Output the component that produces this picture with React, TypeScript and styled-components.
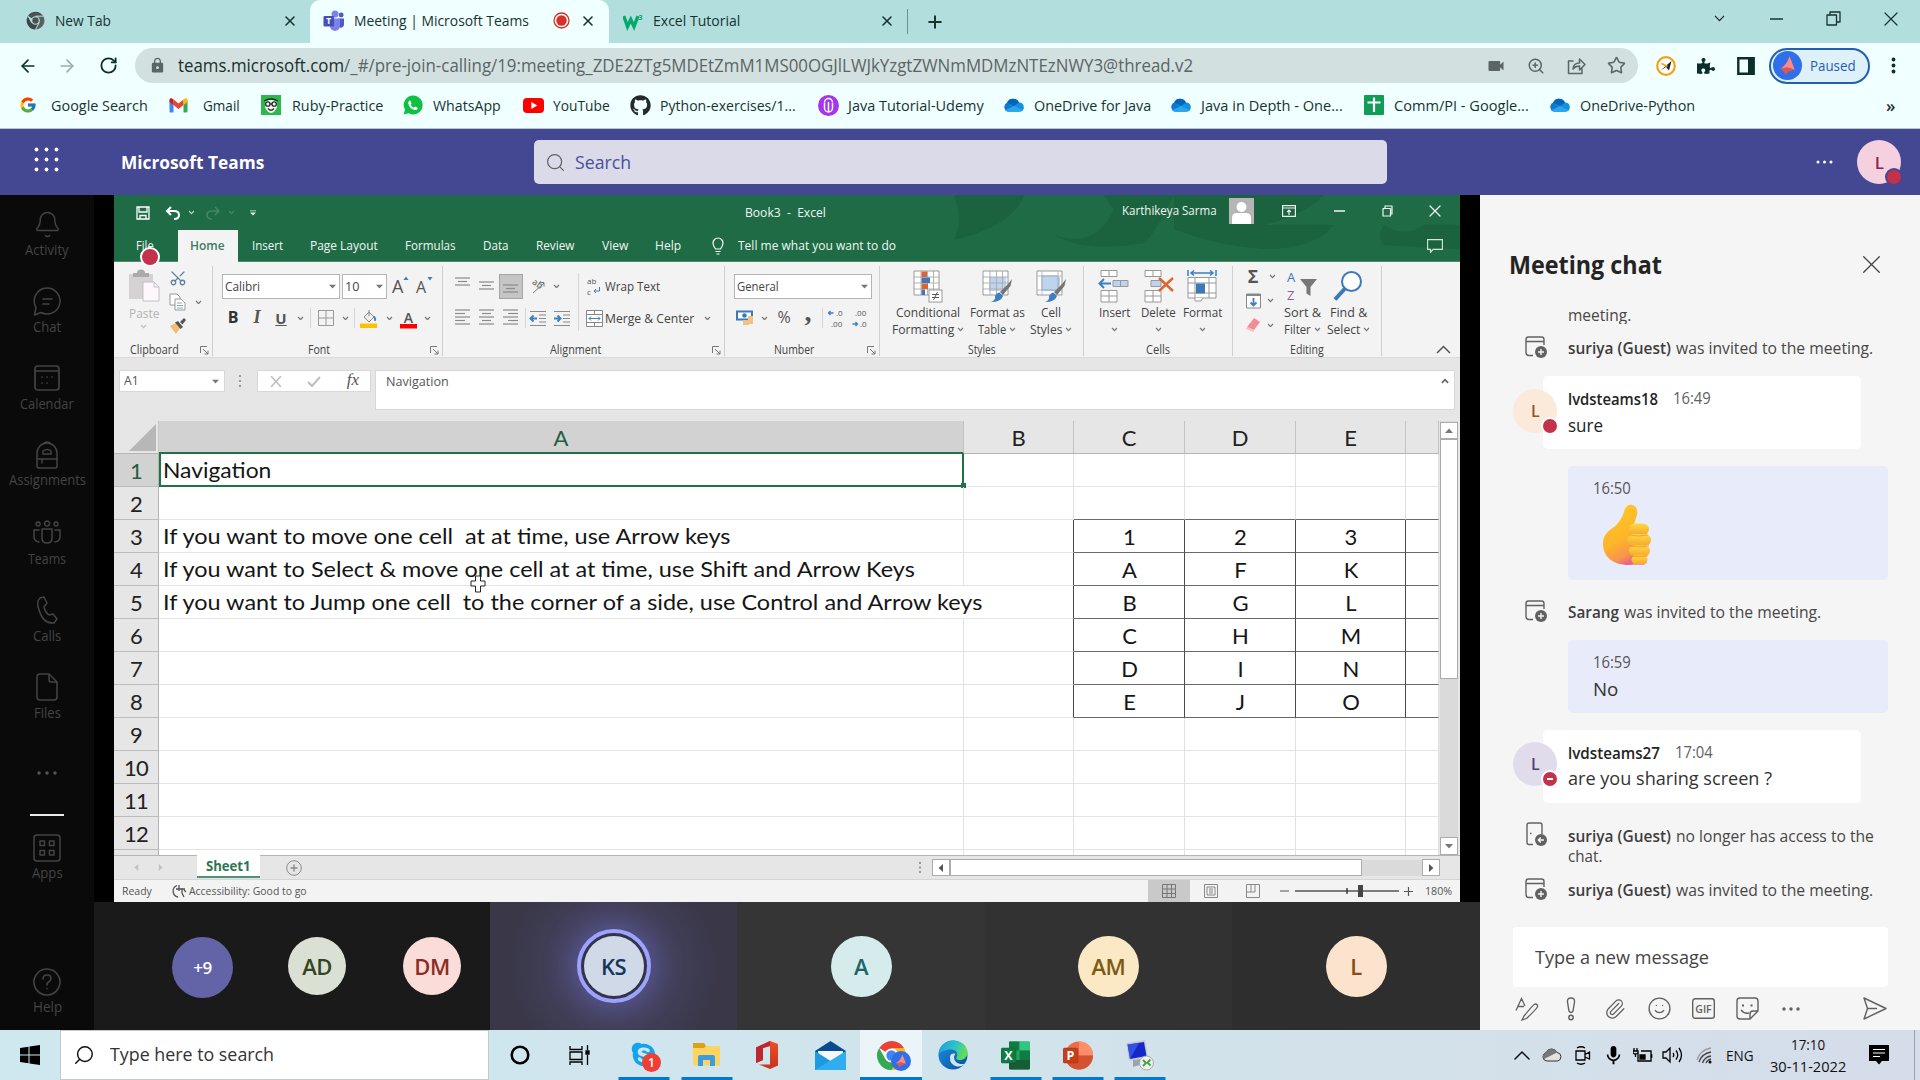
import React, { useLayoutEffect, useRef, useState } from "react";
import styled, { createGlobalStyle, css } from "styled-components";
import { FcGoogle } from "react-icons/fc";
import { FaWhatsapp, FaGithub, FaSkype, FaPuzzlePiece } from "react-icons/fa";
import { MdVideocam, MdLock, MdMic } from "react-icons/md";
import { ArrowLeft, ArrowRight, RotateCw, X, Plus, Star, ZoomIn, Search, Bell, Paperclip, Smile, Scissors } from "lucide-react";

const UI = `"Segoe UI", "Open Sans", "Noto Sans", sans-serif`;
const CAL = `Lato, "Open Sans", sans-serif`;

const Global = createGlobalStyle`
  * { box-sizing: border-box; }
  body { margin: 0; font-family: ${UI}; overflow: hidden; font-variant-ligatures: none; }
  svg { display: block; flex: none; }
`;

/* ---------- text fitted to a column width ---------- */
const FitBox = styled.span<{ $w: number; $size: number; $weight?: number; $color?: string; $font?: string; $ml?: number }>`
  display: block;
  flex: none;
  width: ${p => p.$w}px;
  margin-left: ${p => p.$ml ?? 0}px;
  font-family: ${p => p.$font ?? UI};
  font-size: ${p => p.$size}px;
  font-weight: ${p => p.$weight ?? 400};
  color: ${p => p.$color ?? "inherit"};
  line-height: 1.36;
  white-space: pre;
`;
const FitInner = styled.span`
  display: inline-block;
  transform-origin: 0 50%;
`;
type TProps = { w: number; s: number; b?: number; c?: string; f?: string; ml?: number; children: React.ReactNode };
function T({ w, s, b, c, f, ml, children }: TProps) {
  const ref = useRef<HTMLSpanElement>(null);
  const [k, setK] = useState(1);
  useLayoutEffect(() => {
    if (ref.current) setK(w / ref.current.offsetWidth);
  }, [w, s]);
  return (
    <FitBox $w={w} $size={s} $weight={b} $color={c} $font={f} $ml={ml}>
      <FitInner ref={ref} style={{ transform: `scaleX(${k})` }}>{children}</FitInner>
    </FitBox>
  );
}

/* ---------- generic parts ---------- */
const Screen = styled.div`
  width: 1920px;
  height: 1080px;
  display: flex;
  flex-direction: column;
  background: #000;
  overflow: hidden;
`;
const Slot = styled.div<{ $w: number; $ml?: number; $h?: number; $end?: number; $up?: number }>`
  flex: none;
  width: ${p => p.$w}px;
  margin-left: ${p => p.$ml ?? 0}px;
  display: flex;
  align-items: center;
  justify-content: center;
  ${p => p.$h && css`height: ${p.$h}px;`}
  ${p => p.$end !== undefined && css`align-items: flex-end; padding-bottom: ${p.$end}px;`}
  ${p => p.$up && css`margin-top: -${p.$up}px;`}
`;
const Spacer = styled.div`flex: 1;`;

/* ---------- browser chrome ---------- */
const TabStrip = styled.div`
  height: 43px;
  background: #b2dfdd;
  display: flex;
  align-items: stretch;
  color: #17332f;
`;
const Tab = styled.div<{ $w: number; $pl: number; $active?: boolean }>`
  flex: none;
  width: ${p => p.$w}px;
  padding-left: ${p => p.$pl}px;
  padding-bottom: 2px;
  display: flex;
  align-items: center;
  ${p => p.$active && css`background: #f0ffff; border-radius: 10px 10px 0 0;`}
`;
const TabRule = styled.div`
  width: 1px;
  height: 25px;
  margin: 9px 0 0 4px;
  background: #6d8f8e;
`;
const WindowButtons = styled.div`
  display: flex;
  align-items: center;
  padding-bottom: 6px;
`;
const Toolbar = styled.div`
  height: 45px;
  background: #f0ffff;
  display: flex;
  align-items: center;
  color: #0c2f2d;
`;
const Omnibox = styled.div`
  width: 1503px;
  height: 35px;
  margin-left: 17px;
  border-radius: 18px;
  background: #d3e0e0;
  display: flex;
  align-items: center;
  color: #5a6565;
`;
const Host = styled.span`color: #17302e;`;
const ProfilePill = styled.div`
  width: 101px;
  height: 36px;
  margin-left: 13px;
  border: 2px solid #1f5fb5;
  border-radius: 18px;
  background: #def0f8;
  display: flex;
  align-items: center;
  padding-left: 2px;
`;
const Bookmarks = styled.div`
  height: 41px;
  padding: 0 0 5px 19px;
  background: #f0ffff;
  border-bottom: 1px solid #b9c6c8;
  display: flex;
  align-items: center;
  color: #17332f;
`;
const Bookmark = styled.div<{ $w: number }>`
  flex: none;
  width: ${p => p.$w}px;
  display: flex;
  align-items: center;
`;
const BookIcon = styled.div<{ $w: number }>`
  flex: none;
  width: ${p => p.$w}px;
`;

/* ---------- teams header ---------- */
const TeamsBar = styled.div`
  height: 66px;
  background: #444791;
  display: flex;
  align-items: center;
  color: #fff;
`;
const TeamsSearch = styled.div`
  width: 853px;
  height: 44px;
  margin-left: 270px;
  border-radius: 5px;
  background: #dadae8;
  display: flex;
  align-items: center;
  padding-left: 11px;
`;
const Avatar = styled.div<{ $d: number; $bg: string; $c: string; $s?: number; $ml?: number; $mt?: number }>`
  position: relative;
  flex: none;
  width: ${p => p.$d}px;
  height: ${p => p.$d}px;
  margin-left: ${p => p.$ml ?? 0}px;
  margin-top: ${p => p.$mt ?? 0}px;
  border-radius: 50%;
  background: ${p => p.$bg};
  color: ${p => p.$c};
  font-size: ${p => p.$s ?? 22}px;
  font-weight: 600;
  letter-spacing: -0.5px;
  display: flex;
  align-items: center;
  justify-content: center;
`;
const Presence = styled.span<{ $ring: string; $d: number }>`
  position: absolute;
  right: -2px;
  bottom: -2px;
  width: ${p => p.$d}px;
  height: ${p => p.$d}px;
  border-radius: 50%;
  border: 2px solid ${p => p.$ring};
  background: #c4314b;
  display: flex;
  align-items: center;
  justify-content: center;
`;
const Dash = styled.i`
  width: 6px;
  height: 2px;
  background: #fff;
`;

/* ---------- body ---------- */
const Body = styled.div`
  height: 835px;
  display: flex;
`;
const Rail = styled.nav`
  width: 94px;
  background: #0a0a0a;
  color: #444;
  display: flex;
  flex-direction: column;
`;
const RailItem = styled.div<{ $h?: number }>`
  height: ${p => p.$h ?? 77.2}px;
  flex: none;
  display: flex;
  flex-direction: column;
  align-items: center;
`;
const RailIcon = styled.div<{ $pull?: number }>`
  height: 58px;
  display: flex;
  align-items: center;
  margin-bottom: -${p => p.$pull ?? 13}px;
`;
const RailDots = styled.div`
  height: 77px;
  display: flex;
  align-items: center;
  justify-content: center;
`;
const RailRule = styled.div`
  width: 34px;
  height: 2px;
  margin: 2px 0 3px 30px;
  background: #e8e8e8;
`;
const Stage = styled.main`
  width: 1386px;
  display: flex;
  flex-direction: column;
`;
const ShareArea = styled.div`
  height: 707px;
  padding: 0 20px;
  background: #000;
`;

/* ---------- excel ---------- */
const Excel = styled.section`
  position: relative;
  width: 1346px;
  height: 707px;
  display: flex;
  flex-direction: column;
  background: #e6e6e6;
`;
const XlTop = styled.div`
  position: relative;
  height: 67px;
  background: #1e6b45;
  border-bottom: 1px solid #4c8b6b;
  color: #f1f7f3;
`;
const Swirls = styled.svg`
  position: absolute;
  left: 820px;
  top: 0;
`;
const XlTitle = styled.div`
  position: relative;
  height: 35px;
  display: flex;
  align-items: center;
`;
const XlTabs = styled.div`
  position: relative;
  height: 32px;
  display: flex;
  align-items: center;
`;
const HomeTab = styled.div`
  width: 60px;
  height: 32px;
  margin-left: 24px;
  padding-right: 2px;
  background: #f3f3f3;
  display: flex;
  align-items: center;
  justify-content: center;
`;
const UserPic = styled.div`
  width: 25px;
  height: 26px;
  margin: -3px 0 0 12px;
  background: #b5b5b5;
  overflow: hidden;
`;
const RecDot = styled.span`
  position: absolute;
  left: 26px;
  top: 52px;
  width: 20px;
  height: 20px;
  border-radius: 50%;
  border: 2px solid #fff;
  background: #c4314b;
`;
const Ribbon = styled.div`
  height: 96px;
  background: #f3f3f3;
  border-bottom: 1px solid #dadada;
  display: flex;
  color: #444;
`;
const Group = styled.div<{ $w: number }>`
  position: relative;
  flex: none;
  width: ${p => p.$w}px;
  height: 90px;
  margin-top: 4px;
  border-right: 1px solid #cfcfcf;
  display: flex;
  flex-direction: column;
`;
const GroupBody = styled.div`
  flex: none;
  height: 75px;
  display: flex;
`;
const GroupRows = styled.div<{ $full?: boolean }>`
  flex: none;
  display: flex;
  flex-direction: column;
  padding-top: 4px;
  ${p => p.$full && css`height: 75px;`}
`;
const GroupRow = styled.div`
  height: 32px;
  display: flex;
  align-items: center;
`;
const GroupFoot = styled.div`
  flex: none;
  height: 17px;
  display: flex;
  align-items: center;
  justify-content: center;
`;
const Launcher = styled.span`
  position: absolute;
  right: 3px;
  bottom: 1px;
`;
const ClipCol = styled.div`
  width: 61px;
  padding: 3px 2px 0 0;
  display: flex;
  flex-direction: column;
  align-items: center;
  gap: 2px;
  color: #b4b4b4;
`;
const MiniCol = styled.div`
  display: flex;
  flex-direction: column;
`;
const MiniRow = styled.div<{ $h?: number }>`
  height: ${p => p.$h ?? 24}px;
  display: flex;
  align-items: center;
`;
const CutIcon = styled(Scissors)`
  margin-left: -6px;
  transform: rotate(-90deg);
`;
const Field = styled.div<{ $w: number; $ml?: number }>`
  flex: none;
  width: ${p => p.$w}px;
  height: 25px;
  margin-left: ${p => p.$ml ?? 0}px;
  padding: 0 3px 0 2px;
  background: #fff;
  border: 1px solid #b5b5b5;
  display: flex;
  align-items: center;
  justify-content: space-between;
`;
const Pressed = styled.div`
  width: 24px;
  height: 25px;
  background: #c5c5c5;
  border: 1px solid #a5a5a5;
  display: flex;
  align-items: center;
  justify-content: center;
`;
const VRule = styled.div<{ $h: number; $ml?: number; $mt?: number }>`
  width: 1px;
  height: ${p => p.$h}px;
  margin-left: ${p => p.$ml ?? 0}px;
  margin-top: ${p => p.$mt ?? 0}px;
  background: #d6d6d6;
`;
const Glyph = styled.span<{ $s: number; $serif?: boolean; $b?: boolean; $i?: boolean; $u?: boolean; $c?: string; $up?: number }>`
  font-family: ${p => (p.$serif ? `"Liberation Serif", serif` : UI)};
  font-size: ${p => p.$s}px;
  font-weight: ${p => (p.$b ? 700 : 400)};
  font-style: ${p => (p.$i ? "italic" : "normal")};
  text-decoration: ${p => (p.$u ? "underline" : "none")};
  color: ${p => p.$c ?? "#555"};
  margin-top: -${p => p.$up ?? 0}px;
  line-height: 1.2;
`;
const Big = styled.div<{ $w: number; $ml?: number }>`
  flex: none;
  width: ${p => p.$w}px;
  margin-left: ${p => p.$ml ?? 0}px;
  padding-top: 2px;
  display: flex;
  flex-direction: column;
  align-items: center;
  color: #444;
`;
const BigIcon = styled.div`
  height: 36px;
  display: flex;
  align-items: center;
`;
const BigLine = styled.div`
  height: 17px;
  display: flex;
  align-items: center;
  gap: 3px;
`;
const FormulaRow = styled.div`
  height: 63px;
  padding: 12px 0 0 5px;
  display: flex;
  align-items: flex-start;
  color: #555;
`;
const NameBox = styled.div<{ $w: number; $ml?: number; $h?: number }>`
  width: ${p => p.$w}px;
  height: ${p => p.$h ?? 22}px;
  margin-left: ${p => p.$ml ?? 0}px;
  background: #fff;
  border: 1px solid #d8d8d8;
  display: flex;
  align-items: center;
  ${p => p.$h && css`align-items: flex-start; padding-top: 2px;`}
`;
const GridArea = styled.div`
  height: 434px;
  display: flex;
`;
const Sheet = styled.div`
  width: 1325px;
  height: 434px;
  overflow: hidden;
`;
const HeadRow = styled.div`
  height: 33px;
  display: flex;
  border-bottom: 1px solid #b5b5b5;
`;
const Corner = styled.div`
  width: 45px;
  display: flex;
  align-items: flex-end;
  justify-content: flex-end;
  padding: 0 2px 2px 0;
  border-right: 1px solid #c8c8c8;
`;
const ColHead = styled.div<{ $w: number; $sel?: boolean }>`
  flex: none;
  width: ${p => p.$w}px;
  background: ${p => (p.$sel ? "#d2d2d2" : "#e6e6e6")};
  color: ${p => (p.$sel ? "#215f42" : "#222")};
  border-right: 1px solid #c2c2c2;
  display: flex;
  align-items: center;
  justify-content: center;
  font: 22px ${CAL};
  ${p => p.$sel && css`border-bottom: 2px solid #217346; margin-bottom: -1px; padding-top: 1px;`}
`;
const GridRow = styled.div`
  height: 33px;
  display: flex;
  background: #fff;
`;
const RowHead = styled.div<{ $sel?: boolean }>`
  flex: none;
  width: 45px;
  background: ${p => (p.$sel ? "#d2d2d2" : "#e6e6e6")};
  color: ${p => (p.$sel ? "#215f42" : "#222")};
  border-right: 1px solid #b5b5b5;
  border-bottom: 1px solid #bcbcbc;
  display: flex;
  align-items: center;
  justify-content: center;
  font: 22px ${CAL};
  letter-spacing: -0.8px;
`;
const Cell = styled.div<{ $w: number; $box?: boolean; $boxTop?: boolean; $open?: boolean; $sel?: boolean; $left?: boolean; $edge?: boolean }>`
  position: relative;
  flex: none;
  width: ${p => p.$w}px;
  padding: 0 0 0 ${p => (p.$left ? 4 : 1)}px;
  border-right: 1px solid ${p => (p.$open ? "transparent" : p.$box || p.$edge ? "#4a4a4a" : "#e0e0e0")};
  border-bottom: 1px solid ${p => (p.$box || p.$boxTop ? "#6a6a6a" : "#e4e4e4")};
  display: flex;
  align-items: center;
  justify-content: ${p => (p.$left ? "flex-start" : "center")};
  color: #151515;
  font: 22px ${CAL};
  z-index: ${p => (p.$left ? 1 : 0)};
  ${p => p.$sel && css`border: 2px solid #217346; border-top: 0; padding: 1px 0 0 2px;`}
`;
const Handle = styled.i`
  position: absolute;
  right: -4px;
  bottom: -3px;
  width: 5px;
  height: 5px;
  background: #217346;
`;
const VScroll = styled.div`
  width: 18px;
  margin-left: 1px;
  padding-top: 1px;
  background: #dadada;
  display: flex;
  flex-direction: column;
`;
const ScrollBox = styled.div<{ $w: number; $h: number }>`
  flex: none;
  width: ${p => p.$w}px;
  height: ${p => p.$h}px;
  background: #fff;
  border: 1px solid #ababab;
  display: flex;
  align-items: center;
  justify-content: center;
`;
const SheetTabs = styled.div`
  height: 25px;
  border-top: 1px solid #b5b5b5;
  border-bottom: 1px solid #d5d5d5;
  display: flex;
  align-items: center;
`;
const SheetTab = styled.div`
  width: 63px;
  height: 23px;
  margin: -2px 0 0 33px;
  padding-right: 1px;
  background: #fff;
  border-bottom: 2px solid #4f9274;
  display: flex;
  align-items: center;
  justify-content: center;
`;
const HTrack = styled.div`
  width: 60px;
  height: 16px;
  background: #dadada;
`;
const XlStatus = styled.div`
  height: 22px;
  padding-right: 8px;
  background: #f3f3f3;
  display: flex;
  align-items: center;
  color: #555;
`;
const ViewOn = styled.div`
  width: 42px;
  height: 22px;
  background: #c9c9c9;
  display: flex;
  align-items: center;
  justify-content: center;
`;
const Cursor = styled.svg`
  position: absolute;
  left: 356px;
  top: 380px;
  z-index: 2;
`;

/* ---------- participants ---------- */
const Strip = styled.div`
  height: 128px;
  display: flex;
  background: #1a1a1a;
`;
const Overflow = styled.div`
  width: 396px;
  display: flex;
  align-items: center;
`;
const Tile = styled.div<{ $bg: string; $w: number }>`
  width: ${p => p.$w}px;
  display: flex;
  align-items: center;
  justify-content: center;
  background: ${p => p.$bg};
`;
const SpeakRing = styled.div`
  width: 74px;
  height: 74px;
  border-radius: 50%;
  border: 4px solid #9ea2ff;
  background: #33334a;
  box-shadow: 0 0 26px 8px rgba(98, 100, 180, 0.45);
  display: flex;
  align-items: center;
  justify-content: center;
`;

/* ---------- chat ---------- */
const Chat = styled.aside`
  width: 440px;
  background: #f5f5f5;
  display: flex;
  flex-direction: column;
  color: #484644;
`;
const ChatHead = styled.div`
  height: 112px;
  padding: 26px 40px 0 29px;
  display: flex;
  align-items: center;
  justify-content: space-between;
`;
const ClippedLine = styled.div`
  height: 17px;
  padding-left: 88px;
  overflow: hidden;
`;
const Raised = styled.div<{ $n: number }>`
  margin-top: -${p => p.$n}px;
`;
const Feed = styled.div`
  height: 592px;
  overflow: hidden;
`;
const Event = styled.div<{ $mt: number; $h: number }>`
  height: ${p => p.$h}px;
  margin-top: ${p => p.$mt}px;
  padding-left: 44px;
  display: flex;
  align-items: flex-start;
`;
const EventText = styled.div<{ $drop?: number }>`
  margin: ${p => p.$drop ?? 2}px 0 0 20px;
  display: grid;
  grid-template-columns: auto auto;
  justify-content: start;
  line-height: 20px;
`;
const Msg = styled.div<{ $mt: number }>`
  height: 73px;
  margin: ${p => p.$mt}px 0 0 33px;
  display: flex;
`;
const Bubble = styled.div`
  width: 318px;
  margin-left: -14px;
  padding: 12px 0 0 25px;
  background: #fff;
  border-radius: 5px;
`;
const AvatarWrap = styled.div<{ $mt: number }>`
  position: relative;
  z-index: 1;
  margin-top: ${p => p.$mt}px;
`;
const Mine = styled.div<{ $h: number; $mt: number }>`
  width: 320px;
  height: ${p => p.$h}px;
  margin: ${p => p.$mt}px 0 0 88px;
  padding: 12px 0 0 25px;
  background: #e8ebfa;
  border-radius: 5px;
`;
const EmojiLine = styled.div`
  padding: 1px 0 0 9px;
`;
const NameLine = styled.div`
  display: flex;
  height: 25px;
`;
const Compose = styled.div`
  width: 375px;
  height: 60px;
  margin: 11px 0 0 33px;
  padding-left: 22px;
  background: #fff;
  border-radius: 4px;
  display: flex;
  align-items: center;
`;
const ComposeTools = styled.div`
  height: 43px;
  padding: 0 0 0 25px;
  display: flex;
  align-items: center;
  color: #616161;
`;

/* ---------- taskbar ---------- */
const Taskbar = styled.footer`
  height: 50px;
  background: linear-gradient(90deg, #cfe7ee 0%, #d0e5ed 35%, #d3e1ea 75%, #d5dcea 100%);
  display: flex;
  align-items: stretch;
  color: #111;
`;
const StartSearch = styled.div`
  width: 429px;
  background: #fff;
  border: 1px solid #c2c9cb;
  display: flex;
  align-items: center;
  padding-left: 13px;
`;
const FlippedSearch = styled(Search)`
  transform: scaleX(-1);
`;
const TaskApp = styled.div<{ $w: number; $run?: boolean; $on?: boolean; $line?: number }>`
  flex: none;
  position: relative;
  width: ${p => p.$w}px;
  display: flex;
  align-items: center;
  justify-content: center;
  ${p => p.$on && css`background: #ebf4f8;`}
  ${p => p.$run && css`
    &::after {
      content: "";
      position: absolute;
      left: 50%;
      bottom: 0;
      width: ${p.$line ?? 51}px;
      height: 3px;
      transform: translateX(-50%);
      background: #0078d7;
    }
  `}
`;
const Clock = styled.div`
  width: 76px;
  margin-left: 16px;
  display: flex;
  flex-direction: column;
  align-items: center;
  justify-content: center;
  gap: 2px;
`;
const Badge = styled.span`
  position: absolute;
  right: 18px;
  bottom: 8px;
  width: 19px;
  height: 19px;
  border-radius: 50%;
  background: #f03e35;
  color: #fff;
  font-size: 12px;
  font-weight: 600;
  display: flex;
  align-items: center;
  justify-content: center;
`;
const ProfileBadge = styled.span`
  position: absolute;
  right: 11px;
  bottom: 9px;
`;
const ShowDesktop = styled.div`
  width: 1px;
  margin: 0 5px 0 25px;
  background: #9aa3ae;
`;

/* ---------- drawings ---------- */
const Chev = ({ s = 7, c = "#777", w = 1.2 }: { s?: number; c?: string; w?: number }) => (
  <svg width={s} height={s * 0.7} viewBox="0 0 10 7" fill="none" stroke={c} strokeWidth={w * 1.5}><path d="M1.5 1.5 5 5.2 8.5 1.5" /></svg>
);
const Tri = ({ s = 7, c = "#777", r = 0 }: { s?: number; c?: string; r?: number }) => (
  <svg width={s} height={s} viewBox="0 0 10 10" fill={c}><path transform={`rotate(${r} 5 5)`} d="M0 2.5h10L5 8z" /></svg>
);
const SizeA = ({ big }: { big?: boolean }) => (
  <svg width="20" height="24" viewBox="0 0 20 24">
    <text x="1" y="19" fontSize={big ? 18 : 16} fill="#555" fontFamily={UI}>A</text>
    <path d={big ? "M12.500 6h5L15 2.500z" : "M12.500 3h5L15 6.500z"} fill="#3d7fc1" />
  </svg>
);
const Chrome = ({ s, gray }: { s: number; gray?: boolean }) => (
  <svg width={s} height={s} viewBox="0 0 48 48">
    <path d="M24 24 5 12.5A22.5 22.5 0 0 1 43.8 13H24z" fill={gray ? "#4b5152" : "#ea4335"} />
    <path d="M24 13h19.8A22.5 22.5 0 0 1 24 46.500l9.600-17z" fill={gray ? "#5a6061" : "#fbbc04"} />
    <path d="M4.800 12.500A22.500 22.500 0 0 0 24 46.500l9.800-17-19.300 0z" fill={gray ? "#3f4546" : "#34a853"} />
    <circle cx="24" cy="24" r="11" fill={gray ? "#b2dfdd" : "#fff"} />
    <circle cx="24" cy="24" r="8" fill={gray ? "#4b5152" : "#4285f4"} />
    {gray && <path d="M24 13h20M14.500 29.500 5 12.500M33.500 29.500 24 46.500" stroke="#b2dfdd" strokeWidth="2.500" />}
  </svg>
);
const TeamsLogo = () => (
  <svg width="22" height="22" viewBox="0 0 22 22">
    <circle cx="12" cy="4" r="3.500" fill="#7b83eb" /><circle cx="18.200" cy="5" r="2.400" fill="#5059c9" />
    <path d="M15 8.500h6V15a3.200 3.200 0 0 1-6 1z" fill="#5059c9" />
    <path d="M7 8.500h10V16a5 5 0 0 1-10 0z" fill="#7b83eb" />
    <rect x="0.500" y="6" width="10.500" height="10.500" rx="1" fill="#4650b8" />
    <text x="5.700" y="14.300" textAnchor="middle" fontSize="8.500" fontWeight="700" fill="#fff" fontFamily={UI}>T</text>
  </svg>
);
const W3 = () => (
  <svg width="20" height="20" viewBox="0 0 20 20">
    <path d="M0.800 5 4.500 15.500 7.800 8.500l3.200 7L15 5" fill="none" stroke="#04aa6d" strokeWidth="3.400" />
    <text x="15.500" y="9" fontSize="7" fontWeight="700" fill="#04aa6d" fontFamily={UI}>3</text>
  </svg>
);
const Gmail = () => (
  <svg width="19" height="15" viewBox="0 0 19 15">
    <path d="M0.500 2v11.500q0 1 1 1H4.500V5z" fill="#4285f4" /><path d="M18.500 2v11.500q0 1-1 1H14.500V5z" fill="#34a853" />
    <path d="M4.500 1.500 9.500 5.500l5-4V7L9.500 11 4.500 7z" fill="#ea4335" />
    <path d="M0.500 4V2C0.500 0 2.500-.2 4.500 1.500V7z" fill="#c5221f" /><path d="M18.500 4V2c0-2-2-2.200-4-.5V7z" fill="#fbbc04" />
  </svg>
);
const Ruby = () => (
  <svg width="20" height="20" viewBox="0 0 20 20">
    <rect width="20" height="20" fill="#2db84b" />
    <path d="M4 7q6-5 12 0v5q-2 5.500-6 6-4-.5-6-6z" fill="#f3f3ee" />
    <path d="M3 6q7-4 14 0" stroke="#1d2a1d" fill="none" strokeWidth="1.300" />
    <g fill="none" stroke="#26302a" strokeWidth="1.300"><circle cx="6.800" cy="9" r="2.200" /><circle cx="13.200" cy="9" r="2.200" /><path d="M9 9h2M7 13.500q3 3.500 6 0" /></g>
  </svg>
);
const WhatsAppLogo = () => (
  <svg width="20" height="20" viewBox="0 0 20 20">
    <path d="M10.200.6a9.400 9.400 0 1 1-4.600 17.600L.6 19.500l1.400-4.800A9.400 9.400 0 0 1 10.200.6z" fill="#0fc143" />
    <path d="M7 5.300l1.600 2.900-1 1.300q1.200 2.300 3.200 3.200l1.300-1.300 2.700 1.500q-.4 2.300-2.800 2.200Q6.500 14 5.200 8q.1-2.200 1.800-2.700z" fill="#fff" />
  </svg>
);
const YT = () => (
  <svg width="21" height="15" viewBox="0 0 21 15"><rect width="21" height="15" rx="4" fill="#f00" /><path d="M8.300 4v7l6-3.500z" fill="#fff" /></svg>
);
const Udemy = () => (
  <svg width="21" height="21" viewBox="0 0 21 21"><circle cx="10.500" cy="10.500" r="10.500" fill="#a435f0" />
    <path d="M6.500 8v5a4 4 0 0 0 8 0V8M6.500 7.500a4 4 0 0 1 8 0M10.500 7v10" fill="none" stroke="#fff" strokeWidth="1.500" /></svg>
);
const Cloud = () => (
  <svg width="22" height="14" viewBox="0 0 22 14">
    <path d="M5 13.500A4.700 4.700 0 0 1 4 4.800 6.500 6.500 0 0 1 16 4.500a4.600 4.600 0 0 1 1.500 9z" fill="#1490df" />
    <path d="M4 4.800a6.500 6.500 0 0 1 12-.3l-5 3.500z" fill="#0364b8" />
    <path d="M4 4.800 17 13.500H5a4.700 4.700 0 0 1-1-8.700z" fill="#0f78d4" />
    <path d="M2 12.200 11 8l9 4.200q-1 1.300-3 1.300H5q-2 0-3-1.300z" fill="#28a8ea" />
  </svg>
);
const SheetsLogo = () => (
  <svg width="20" height="20" viewBox="0 0 20 20"><rect width="20" height="20" rx="1" fill="#0f9d58" /><path d="M10 2.500v14.500M3.500 7.500h13" stroke="#fff" strokeWidth="2.200" /></svg>
);
const Bird = ({ s }: { s: number }) => (
  <svg width={s} height={s} viewBox="0 0 28 28"><circle cx="14" cy="14" r="14" fill="#2f6fec" />
    <path d="M16 5q2 5 5 13l-7-2-7 1q6-3 9-12z" fill="#ff8a80" /><path d="M14 16l7 2-6 2-3 3q-1-3-5-6z" fill="#e0554f" /></svg>
);
const DotGrid = () => (
  <svg width="25" height="25" viewBox="0 0 25 25" fill="#fff">
    {[2.5, 12.5, 22.5].flatMap(y => [2.5, 12.5, 22.5].map(x => <circle key={`${x}-${y}`} cx={x} cy={y} r="1.900" />))}
  </svg>
);
const Dots = ({ c, g = 7, r = 1.7 }: { c: string; g?: number; r?: number }) => (
  <svg width={g * 2 + 6} height="6" viewBox={`0 0 ${g * 2 + 6} 6`} fill={c}><circle cx="3" cy="3" r={r} /><circle cx={3 + g} cy="3" r={r} /><circle cx={3 + 2 * g} cy="3" r={r} /></svg>
);
const Line = ({ w = 26, h = 28, d, sw = 1.5 }: { w?: number; h?: number; d: string; sw?: number }) => (
  <svg width={w} height={h} viewBox={`0 0 ${w} ${h}`} fill="none" stroke="currentColor" strokeWidth={sw} strokeLinecap="round" strokeLinejoin="round"><path d={d} /></svg>
);
const Lines = ({ l, h = 18 }: { l: [number, number, number][]; h?: number }) => (
  <svg width="16" height={h} viewBox={`0 0 16 ${h}`} stroke="#8a8a8a" strokeWidth="1.200">
    {l.map(([y, a, b]) => <path key={y} d={`M${a} ${y}H${b}`} />)}
  </svg>
);
const Launch = () => (
  <svg width="9" height="9" viewBox="0 0 9 9" fill="none" stroke="#777"><path d="M.5 7V.5H7M3 3l5 5M8 4.500V8H4.500" /></svg>
);
const GridIcon = ({ kind }: { kind: "cond" | "table" | "cell" }) => (
  <svg width="32" height="34" viewBox="0 0 32 34">
    <path d="M2 2h25v24H2z" fill="#fff" stroke="#999" />
    {kind !== "cond" && <rect x="8" y="8" width="17" height="14" fill="#bcd4ee" />}
    {kind !== "cell" && <path d="M2 8h25M2 14h25M2 20h25M9 2v24M15.500 2v24M21.500 2v24" stroke="#aaa" strokeWidth=".9" />}
    {kind === "cell" && <g><path d="M2 7h25M2 21h25M7 2v24M23 2v24" stroke="#bbb" /><rect x="7" y="7" width="16" height="14" fill="#bcd4ee" stroke="#9ab" /></g>}
    {kind === "cond" ? (
      <g><path d="M9.500 2.500H15V8H9.500zM9.500 14.500H16V20H9.500z" fill="#e0622f" /><path d="M9.500 8.500H18V14H9.500zM9.500 20.500H13V26H9.500z" fill="#3d78b8" />
        <rect x="17" y="21" width="13" height="12" fill="#fff" stroke="#999" /><path d="M20 25.500h7M20 28.500h7M25.500 23l-4 8" stroke="#555" /></g>
    ) : (
      <g><path d="M31 10 29.500 17 22 26l-3-3 8-8z" fill="#757575" /><path d="M18.500 23.500 22 27q-2 6-12 6 5-2 4-6 2-3.500 4.500-3.500z" fill="#3d7fc1" /></g>
    )}
  </svg>
);
const CellsIcon = ({ kind }: { kind: "ins" | "del" | "fmt" }) => (
  <svg width="32" height="34" viewBox="0 0 32 34" fill="#fff" stroke="#999">
    {kind === "fmt" ? (
      <g><path d="M2 8.500h28V29H2z" /><path d="M2 14h28M2 24h28M9 8.500V29M23 8.500V29" fill="none" /><path d="M9 29v3h6l2-3" fill="#fff" /><rect x="10" y="14.500" width="9" height="10" fill="#3d78b8" stroke="none" />
        <path d="M5 4h22M8 1.500 5 4l3 2.500M24 1.500 27 4l-3 2.500M2 1v6M30 1v6" stroke="#3d7fc1" fill="none" strokeWidth="1.500" /></g>
    ) : (
      <g><path d="M3 1.500h16v6H3zM11 1.500v6M3 21.500h16V33H3zM3 27h16M11 21.500V33" />
        <path d={kind === "ins" ? "M15 11.500h15v6H15zM22.500 11.500v6" : "M9 11.500h10v6H9z"} fill="#bcd4ee" />
        {kind === "ins" ? <path d="M13 14.500H2M6 10l-4.500 4.500L6 19" stroke="#3d7fc1" fill="none" strokeWidth="2" />
          : <path d="M17 9 31 22M31 9 17 22" stroke="#e0622f" fill="none" strokeWidth="2.400" />}</g>
    )}
  </svg>
);
const EventIcon = ({ kind }: { kind: "add" | "leave" }) => (
  <svg width="24" height="24" viewBox="0 0 24 24" fill="none" stroke="#616161" strokeWidth="1.400">
    {kind === "add" ? <path d="M9 20.500H5a3 3 0 0 1-3-3V4.500A2.500 2.500 0 0 1 4.500 2h13A2.500 2.500 0 0 1 20 4.500V10M2 6.500h18" />
      : <path d="M9 22.500H5A2 2 0 0 1 3 20.500V3a2 2 0 0 1 2-2h11a2 2 0 0 1 2 2v9M6 11.500h1.500" />}
    <circle cx="17" cy={kind === "add" ? 17 : 18} r="6" fill="#616161" stroke="none" />
    {kind === "add" ? <path d="M17 14v6M14 17h6" stroke="#f5f5f5" /> : <path d="M20 18h-5.500M16.800 15.500 14.300 18l2.500 2.500" stroke="#f5f5f5" />}
  </svg>
);
const Thumb = () => (
  <svg width="50" height="62" viewBox="0 0 50 62">
    <defs>
      <linearGradient id="hand" x1="0.300" y1="0" x2="0.600" y2="1"><stop offset="0" stopColor="#ffc62a" /><stop offset=".6" stopColor="#fdb528" /><stop offset=".88" stopColor="#f8924f" /><stop offset="1" stopColor="#e8697c" /></linearGradient>
      <linearGradient id="fing" x1="0" y1="0" x2="0" y2="1"><stop offset="0" stopColor="#ffd93b" /><stop offset="1" stopColor="#f7a632" /></linearGradient>
    </defs>
    <path d="M22 8c1-5 4-8 8-7 5 1 6 6 5 10l-3 9v38q0 3-5 3C10 61 1 52 1 40c0-9 5-13 11-17 5-4 8-9 10-15z" fill="url(#hand)" />
    <path d="M29 61h12q4-1 4-4H24z" fill="#e8697c" opacity=".6" />
    <g fill="url(#fing)"><rect x="27" y="19.500" width="20" height="11.500" rx="5.700" /><rect x="25.500" y="30" width="23.500" height="12" rx="6" /><rect x="27" y="41.500" width="21" height="10.500" rx="5.200" /><rect x="29.500" y="51.500" width="16" height="8.500" rx="4.200" /></g>
    <path d="M27 31q10 2 19 0M27 42q10 2 20 0M29 52q9 1.500 17 0" stroke="#e8932f" fill="none" opacity=".7" />
  </svg>
);
const Edge = () => (
  <svg width="30" height="30" viewBox="0 0 30 30">
    <defs><linearGradient id="eg" x1="0" y1="0" x2="1" y2=".3"><stop offset="0" stopColor="#1f9be0" /><stop offset=".6" stopColor="#2cc3c9" /><stop offset="1" stopColor="#5fdc5a" /></linearGradient>
      <linearGradient id="eb" x1="0" y1="0" x2="1" y2="1"><stop offset="0" stopColor="#1b8fe0" /><stop offset="1" stopColor="#0b4f9e" /></linearGradient></defs>
    <circle cx="15" cy="15" r="14.500" fill="url(#eb)" />
    <path d="M.6 14C1 6 7 .5 15 .5c8.500 0 14.500 5.500 14.500 12 0 5-4 7.500-7.500 7.500-3 0-4.500-1-3.500-2.500 2-3.500 0-8-5.500-8C7 9.500 2 12 .6 14z" fill="url(#eg)" />
    <path d="M12 17q-.5 8 7 9.500 5 .5 8-2.800-3.500 1-7-.5-4-2-4-6 0-2 1.500-3.500-5-1-5.500 3.300z" fill="#d0e5ed" />
  </svg>
);
const OfficeDoc = ({ l, c, d }: { l: string; c: string; d: string }) => (
  <svg width="30" height="29" viewBox="0 0 30 29">
    {l === "X" ? (
      <g><rect x="8" y="0.500" width="21" height="28" rx="1.500" fill="#21a366" /><path d="M8 .5h10.500v9H8z" fill="#107c41" /><path d="M18.500.5H29v9H18.500z" fill="#33c481" /><path d="M8 19h21v8q0 1.500-1.500 1.500h-18Q8 28.500 8 27z" fill="#185c37" /><path d="M18.500 9.500H29V19H18.500z" fill="#107c41" /></g>
    ) : (
      <g><circle cx="16" cy="14.500" r="14" fill="#ed6c47" /><path d="M16 .5a14 14 0 0 1 14 14H16z" fill="#ff8f6b" /><path d="M2 14.500h28a14 14 0 0 1-28 0z" fill="#d35230" /></g>
    )}
    <rect x="0" y="7" width="15" height="15" rx="1.500" fill={c} stroke={d} strokeWidth=".5" />
    <text x="7.500" y="19" textAnchor="middle" fontSize="12.500" fontWeight="700" fill="#fff" fontFamily={UI}>{l}</text>
  </svg>
);
const HLine = ({ left = true }: { left?: boolean }) => (
  <svg width="18" height="17" viewBox="0 0 18 17" stroke="#8a8a8a" strokeWidth="1.200"><path d="M1 1.500h16M10 5h7M10 8.500h7M10 12h7M1 15.500h16" />
    <path d={left ? "M8 8.500H2M4.500 5.500 1.500 8.500l3 3" : "M1 8.500h6M4.500 5.500l3 3-3 3"} stroke="#3d7fc1" strokeWidth="2" fill="none" /></svg>
);

/* ---------- browser ---------- */
/* x: left edge of the icon, tx: left edge of the label, tw: label width */
const bookmarks: { x: number; tx: number; tw: number; t: string; icon: React.ReactNode }[] = [
  { x: 19, tx: 51, tw: 97, t: "Google Search", icon: <FcGoogle size={18} /> },
  { x: 169, tx: 203, tw: 37, t: "Gmail", icon: <Gmail /> },
  { x: 261, tx: 292, tw: 91, t: "Ruby-Practice", icon: <Ruby /> },
  { x: 403, tx: 433, tw: 68, t: "WhatsApp", icon: <WhatsAppLogo /> },
  { x: 523, tx: 553, tw: 57, t: "YouTube", icon: <YT /> },
  { x: 630, tx: 660, tw: 136, t: "Python-exercises/1...", icon: <FaGithub size={21} color="#24292e" /> },
  { x: 818, tx: 848, tw: 136, t: "Java Tutorial-Udemy", icon: <Udemy /> },
  { x: 1003, tx: 1034, tw: 117, t: "OneDrive for Java", icon: <Cloud /> },
  { x: 1170, tx: 1201, tw: 142, t: "Java in Depth - One...", icon: <Cloud /> },
  { x: 1364, tx: 1394, tw: 135, t: "Comm/PI - Google...", icon: <SheetsLogo /> },
  { x: 1549, tx: 1580, tw: 115, t: "OneDrive-Python", icon: <Cloud /> },
];

function Browser() {
  return (
    <>
      <TabStrip>
        <Tab $w={310} $pl={26}>
          <Chrome s={19} gray /><T w={56} s={15} ml={10}>New Tab</T><Slot $w={16} $ml={171}><X size={16} strokeWidth={2.4} /></Slot>
        </Tab>
        <Tab $w={299} $pl={13} $active>
          <TeamsLogo /><T w={175} s={15} ml={9}>Meeting | Microsoft Teams</T>
          <Slot $w={18} $ml={23}><svg width="17" height="17" viewBox="0 0 17 17"><circle cx="8.500" cy="8.500" r="7.500" fill="none" stroke="#d93025" strokeWidth="1.300" /><circle cx="8.500" cy="8.500" r="5.200" fill="#d93025" /></svg></Slot>
          <Slot $w={16} $ml={10}><X size={16} strokeWidth={2.4} /></Slot>
        </Tab>
        <Tab $w={294} $pl={14}>
          <W3 /><T w={87} s={15} ml={10}>Excel Tutorial</T><Slot $w={16} $ml={139}><X size={16} strokeWidth={2.4} /></Slot>
        </Tab>
        <TabRule />
        <Slot $w={20} $ml={17}><Plus size={20} strokeWidth={2.4} /></Slot>
        <Spacer />
        <WindowButtons>
          <Slot $w={57}><Chev s={13} c="#222" w={0.6} /></Slot>
          <Slot $w={57}><Line w={13} h={2} d="M0 1h13" sw={1.4} /></Slot>
          <Slot $w={57}><Line w={15} h={15} d="M1 4h9.500v10H1zM4 4V1h10v10h-3.500" sw={1.3} /></Slot>
          <Slot $w={58}><Line w={14} h={14} d="M1 1l12 12M13 1 1 13" sw={1.2} /></Slot>
        </WindowButtons>
      </TabStrip>
      <Toolbar>
        <Slot $w={20} $ml={18}><ArrowLeft size={20} /></Slot>
        <Slot $w={20} $ml={19}><ArrowRight size={20} color="#98adad" /></Slot>
        <Slot $w={20} $ml={21}><RotateCw size={19} strokeWidth={2.3} /></Slot>
        <Omnibox>
          <Slot $w={16} $ml={14}><MdLock size={17} /></Slot>
          <T w={1015} s={17.5} ml={13}><Host>teams.microsoft.com</Host>/_#/pre-join-calling/19:meeting_ZDE2ZTg5MDEtZmM1MS00OGJlLWJkYzgtZWNmMDMzNTEzNWY3@thread.v2</T>
          <Slot $w={20} $ml={293}><MdVideocam size={20} /></Slot>
          <Slot $w={20} $ml={20}><ZoomIn size={18} /></Slot>
          <Slot $w={20} $ml={20}><Line w={19} h={18} d="M6 4H1.500v12.500H15V12M6 12q.5-6 6.500-6V2l5.500 5.500L12.500 13V9q-4 0-6.500 3z" /></Slot>
          <Slot $w={20} $ml={20}><Star size={19} /></Slot>
        </Omnibox>
        <Slot $w={20} $ml={18}>
          <svg width="20" height="20" viewBox="0 0 20 20"><circle cx="10" cy="10" r="8.800" fill="#fff" stroke="#f5a010" strokeWidth="2.200" /><path d="M4.500 14.500 15.500 5l-2.500 9.500-3-3.500z" fill="#222" /><path d="M5.500 7.500l6 3" stroke="#f5a010" strokeWidth="1.600" /></svg>
        </Slot>
        <Slot $w={20} $ml={20}><FaPuzzlePiece size={18} /></Slot>
        <Slot $w={20} $ml={20}><svg width="18" height="18" viewBox="0 0 18 18"><path d="M1.300 1.300h15.400v15.400H1.300z" fill="none" stroke="#0c2f2d" strokeWidth="2.400" /><path d="M11 1h6v16h-6z" fill="#0c2f2d" /></svg></Slot>
        <ProfilePill><Bird s={29} /><T w={46} s={14.5} c="#1c5cb8" ml={8}>Paused</T></ProfilePill>
        <Slot $w={6} $ml={20}><svg width="5" height="17" viewBox="0 0 5 17" fill="#0c2f2d"><circle cx="2.500" cy="2.500" r="1.900" /><circle cx="2.500" cy="8.500" r="1.900" /><circle cx="2.500" cy="14.500" r="1.900" /></svg></Slot>
      </Toolbar>
      <Bookmarks>
        {bookmarks.map((b, i) => (
          <Bookmark key={b.t} $w={(bookmarks[i + 1]?.x ?? 1886) - b.x}>
            <BookIcon $w={b.tx - b.x}>{b.icon}</BookIcon>
            <T w={b.tw} s={15}>{b.t}</T>
          </Bookmark>
        ))}
        <T w={9} s={17} b={600}>»</T>
      </Bookmarks>
    </>
  );
}

const RailBtn = ({ label, w, children, h, pull }: { label: string; w: number; h?: number; pull?: number; children: React.ReactNode }) => (
  <RailItem $h={h}><RailIcon $pull={pull}>{children}</RailIcon><T w={w} s={14}>{label}</T></RailItem>
);

function ExcelRibbon() {
  return (
    <Ribbon>
      <Group $w={99}>
        <GroupBody>
          <ClipCol>
            <svg width="32" height="33" viewBox="0 0 32 33"><path d="M1 5h24v25H1z" fill="#d4d2d3" /><path d="M5 8V4h4q0-3.500 4-3.500T17 4h4v4z" fill="#ababab" /><path d="M15 13h11l5 5v14H15z" fill="#fbf7fb" stroke="#c5c0c5" /><path d="M26 13v5h5" fill="none" stroke="#c5c0c5" /></svg>
            <T w={30} s={13.5}>Paste</T>
            <Chev c="#c0c0c0" />
          </ClipCol>
          <MiniCol>
            <MiniRow><CutIcon size={18} color="#5e7fa3" strokeWidth={1.7} /></MiniRow>
            <MiniRow><Slot $w={17} $ml={-6}><svg width="17" height="18" viewBox="0 0 17 18" fill="#fff" stroke="#999"><path d="M1 1h7l3 3v8H1z" /><path d="M6 6h6l4 4v7H6z" /><path d="M8 10h5M8 12.500h6M8 15h6" stroke="#7fa5cf" /></svg></Slot><Slot $w={7} $ml={9}><Chev /></Slot></MiniRow>
            <MiniRow><Slot $w={17} $ml={-6}><svg width="17" height="16" viewBox="0 0 17 16"><path d="M1 8l6-3 4 5-4 6z" fill="#f4bd73" /><path d="M6 4.500 9 3l5 6-2.500 2zM11 4l4-4 2 2-3.500 4.500z" fill="#555" /></svg></Slot></MiniRow>
          </MiniCol>
        </GroupBody>
        <GroupFoot><T w={49} s={12.5} ml={-17}>Clipboard</T></GroupFoot>
        <Launcher><Launch /></Launcher>
      </Group>
      <Group $w={230}>
        <GroupRows $full>
          <GroupRow>
            <Field $w={118} $ml={9}><T w={35} s={13.5}>Calibri</T><Tri /></Field>
            <Field $w={45} $ml={2}><T w={14} s={13.5}>10</T><Tri /></Field>
            <Slot $w={20} $ml={4}><SizeA big /></Slot>
            <Slot $w={20} $ml={4}><SizeA /></Slot>
          </GroupRow>
          <GroupRow>
            <Slot $w={14} $ml={13}><Glyph $s={16} $b $c="#333">B</Glyph></Slot>
            <Slot $w={14} $ml={10}><Glyph $s={18} $serif $i $b>I</Glyph></Slot>
            <Slot $w={14} $ml={10}><Glyph $s={15} $u $b>U</Glyph></Slot>
            <Slot $w={8} $ml={8}><Chev /></Slot>
            <VRule $h={20} $ml={6} />
            <Slot $w={17} $ml={6}><svg width="16" height="16" viewBox="0 0 16 16" fill="none" stroke="#999"><path d="M.5.5h15v15H.5zM8 .5v15M.5 8h15" /></svg></Slot>
            <Slot $w={8} $ml={7}><Chev /></Slot>
            <VRule $h={20} $ml={5} />
            <Slot $w={18} $ml={5}><svg width="18" height="19" viewBox="0 0 18 19"><path d="M4 8 9 3l5 5-5 5z" fill="#eee" stroke="#888" /><path d="M9 7V1" stroke="#888" /><path d="M14 7q3 3 1 5z" fill="#3d7fc1" stroke="#3d7fc1" /><path d="M0 14.500h17V19H0z" fill="#ffc000" /></svg></Slot>
            <Slot $w={8} $ml={7}><Chev /></Slot>
            <Slot $w={18} $ml={6}><svg width="17" height="21" viewBox="0 0 17 21"><text x="8.500" y="15" textAnchor="middle" fontSize="14" fontWeight="600" fill="#555" fontFamily={UI}>A</text><path d="M0 16h17v4.500H0z" fill="#f00" /></svg></Slot>
            <Slot $w={8} $ml={6}><Chev /></Slot>
          </GroupRow>
        </GroupRows>
        <GroupFoot><T w={22} s={12.5} ml={-18}>Font</T></GroupFoot>
        <Launcher><Launch /></Launcher>
      </Group>
      <Group $w={282}>
        <GroupBody>
          <GroupRows>
            <GroupRow>
              <Slot $w={16} $ml={12}><Lines h={20} l={[[2, 0, 15], [5.5, 3, 12], [9, 0, 15]]} /></Slot>
              <Slot $w={16} $ml={8}><Lines h={18} l={[[5, 0, 15], [8.5, 3, 12], [12, 0, 15]]} /></Slot>
              <Slot $w={24} $ml={4}><Pressed><Lines h={18} l={[[8, 0, 15], [11.5, 3, 12], [15, 0, 15]]} /></Pressed></Slot>
              <Slot $w={18} $ml={7}><svg width="22" height="20" viewBox="0 0 22 20"><text x="4" y="10" fontSize="9" fill="#555" fontFamily={UI} transform="rotate(35 8 8)">ab</text><path d="M5 17 16 7M12 6.500h4v4" stroke="#777" fill="none" /></svg></Slot>
              <Slot $w={8} $ml={4}><Chev /></Slot>
            </GroupRow>
            <GroupRow>
              <Slot $w={16} $ml={12}><Lines l={[[1, 0, 15], [4.5, 0, 10], [8, 0, 15], [11.5, 0, 10], [15, 0, 15]]} /></Slot>
              <Slot $w={16} $ml={8}><Lines l={[[1, 0, 15], [4.5, 3, 12], [8, 0, 15], [11.5, 3, 12], [15, 0, 15]]} /></Slot>
              <Slot $w={16} $ml={8}><Lines l={[[1, 0, 15], [4.5, 5, 15], [8, 0, 15], [11.5, 5, 15], [15, 0, 15]]} /></Slot>
              <VRule $h={20} $ml={6} />
              <Slot $w={18} $ml={3}><HLine /></Slot>
              <Slot $w={18} $ml={6}><HLine left={false} /></Slot>
            </GroupRow>
          </GroupRows>
          <VRule $h={58} $ml={7} $mt={7} />
          <GroupRows>
            <GroupRow>
              <Slot $w={18} $ml={6}><svg width="14" height="22" viewBox="0 0 14 22" fontFamily={UI} fontSize="8" fill="#555"><text x="0" y="9">ab</text><text x="0" y="20">c</text><path d="M12.500 12v4H7M9 14l-2 2 2 2" fill="none" stroke="#3d7fc1" /></svg></Slot>
              <T w={55} s={13.5} ml={2}>Wrap Text</T>
            </GroupRow>
            <GroupRow>
              <Slot $w={18} $ml={6}><svg width="17" height="17" viewBox="0 0 17 17" fill="#fff" stroke="#888"><path d="M.5.5h16v16H.5zM.5 4.500h16M.5 12.500h16M8.500.5v4M8.500 12.500v4" /><path d="M3 8.500h11M5 6.500l-2 2 2 2M12 6.500l2 2-2 2" stroke="#3d7fc1" fill="none" /></svg></Slot>
              <T w={89} s={13.5} ml={2}>Merge & Center</T>
              <Slot $w={8} $ml={9}><Chev /></Slot>
            </GroupRow>
          </GroupRows>
        </GroupBody>
        <GroupFoot><T w={51} s={12.5} ml={-17}>Alignment</T></GroupFoot>
        <Launcher><Launch /></Launcher>
      </Group>
      <Group $w={155}>
        <GroupRows $full>
          <GroupRow><Field $w={138} $ml={9}><T w={42} s={13.5}>General</T><Tri /></Field></GroupRow>
          <GroupRow>
            <Slot $w={18} $ml={11}><svg width="18" height="16" viewBox="0 0 18 16"><path d="M1 1.500h15v8H1z" fill="#fff" stroke="#3d78b8" strokeWidth="2" /><circle cx="8.500" cy="5.500" r="2.300" fill="#3d78b8" /><path d="M7 10h6v5H7zM12 6h5v8h-5z" fill="#f0c283" /></svg></Slot>
            <Slot $w={8} $ml={6}><Chev /></Slot>
            <Slot $w={18} $ml={7}><Glyph $s={16}>%</Glyph></Slot>
            <Slot $w={12} $ml={9}><Glyph $s={28} $b $serif $up={13}>,</Glyph></Slot>
            <VRule $h={20} $ml={8} />
            <Slot $w={20} $ml={4}><svg width="20" height="24" viewBox="0 0 20 24" fontFamily={UI} fontSize="8" fill="#555"><text x="9" y="10">.0</text><text x="4" y="21">.00</text><path d="M6.500 7h-5M3.500 5l-2 2 2 2" stroke="#3d7fc1" fill="none" strokeWidth="1.300" /></svg></Slot>
            <Slot $w={20} $ml={4}><svg width="20" height="24" viewBox="0 0 20 24" fontFamily={UI} fontSize="8" fill="#555"><text x="4" y="10">.00</text><text x="9" y="21">.0</text><path d="M1.500 18h5M4.500 16l2 2-2 2" stroke="#3d7fc1" fill="none" strokeWidth="1.300" /></svg></Slot>
          </GroupRow>
        </GroupRows>
        <GroupFoot><T w={40} s={12.5} ml={-17}>Number</T></GroupFoot>
        <Launcher><Launch /></Launcher>
      </Group>
      <Group $w={204}>
        <GroupBody>
          <Big $w={76} $ml={10}><BigIcon><GridIcon kind="cond" /></BigIcon><BigLine><T w={64} s={13.5}>Conditional</T></BigLine><BigLine><T w={62} s={13.5}>Formatting</T><Chev /></BigLine></Big>
          <Big $w={60} $ml={1}><BigIcon><GridIcon kind="table" /></BigIcon><BigLine><T w={55} s={13.5}>Format as</T></BigLine><BigLine><T w={28} s={13.5}>Table</T><Chev /></BigLine></Big>
          <Big $w={48}><BigIcon><GridIcon kind="cell" /></BigIcon><BigLine><T w={20} s={13.5}>Cell</T></BigLine><BigLine><T w={32} s={13.5}>Styles</T><Chev /></BigLine></Big>
        </GroupBody>
        <GroupFoot><T w={28} s={12.5}>Styles</T></GroupFoot>
      </Group>
      <Group $w={149}>
        <GroupBody>
          <Big $w={40} $ml={10}><BigIcon><CellsIcon kind="ins" /></BigIcon><BigLine><T w={31} s={13.5}>Insert</T></BigLine><BigLine><Chev /></BigLine></Big>
          <Big $w={44} $ml={2}><BigIcon><CellsIcon kind="del" /></BigIcon><BigLine><T w={35} s={13.5}>Delete</T></BigLine><BigLine><Chev /></BigLine></Big>
          <Big $w={44}><BigIcon><CellsIcon kind="fmt" /></BigIcon><BigLine><T w={39} s={13.5}>Format</T></BigLine><BigLine><Chev /></BigLine></Big>
        </GroupBody>
        <GroupFoot><T w={24} s={12.5}>Cells</T></GroupFoot>
      </Group>
      <Group $w={149}>
        <GroupBody>
          <MiniCol>
            <MiniRow $h={21}><Slot $w={16} $ml={12}><Glyph $s={18} $b>Σ</Glyph></Slot><Slot $w={8} $ml={7}><Chev /></Slot></MiniRow>
            <MiniRow $h={27}><Slot $w={16} $ml={12}><svg width="15" height="16" viewBox="0 0 15 16" fill="#fff" stroke="#888"><path d="M.5 1h14v14H.5z" /><path d="M.5 2h14" strokeWidth="2" /><path d="M7.500 5v7M4.500 9.500l3 3 3-3" stroke="#3d7fc1" strokeWidth="1.800" fill="none" /></svg></Slot><Slot $w={8} $ml={5}><Chev /></Slot></MiniRow>
            <MiniRow $h={22}><Slot $w={16} $ml={12}><svg width="15" height="14" viewBox="0 0 15 14"><path d="M8 0l6 4-6 8-7-3z" fill="#f28d96" /><path d="M1 9l7 3v2l-8-3z" fill="#f9c0c4" /></svg></Slot><Slot $w={8} $ml={5}><Chev /></Slot></MiniRow>
          </MiniCol>
          <Big $w={44} $ml={4}><BigIcon><svg width="30" height="36" viewBox="0 0 30 36" fontFamily={UI} fontSize="13"><text x="0" y="14" fill="#3d78b8">A</text><text x="0" y="32" fill="#8e5bb5">Z</text><path d="M13 11h17l-6.500 8v9l-4-2.500V19z" fill="#777" /></svg></BigIcon><BigLine><T w={37} s={13.5}>Sort &</T></BigLine><BigLine><T w={27} s={13.5}>Filter</T><Chev /></BigLine></Big>
          <Big $w={46} $ml={1}><BigIcon><svg width="30" height="32" viewBox="0 0 30 32"><circle cx="18.500" cy="11.500" r="9.500" fill="#fff" stroke="#3d78b8" strokeWidth="2" /><path d="M12 18.500 2 29.500" stroke="#3d78b8" strokeWidth="4" /></svg></BigIcon><BigLine><T w={37} s={13.5}>Find &</T></BigLine><BigLine><T w={33} s={13.5}>Select</T><Chev /></BigLine></Big>
        </GroupBody>
        <GroupFoot><T w={34} s={12.5}>Editing</T></GroupFoot>
      </Group>
      <Slot $w={15} $ml={54} $end={3}><svg width="15" height="9" viewBox="0 0 15 9" fill="none" stroke="#555" strokeWidth="1.500"><path d="M1 8l6.500-6.500L14 8" /></svg></Slot>
    </Ribbon>
  );
}

const tableRows: Record<number, string[]> = { 3: ["1", "2", "3"], 4: ["A", "F", "K"], 5: ["B", "G", "L"], 6: ["C", "H", "M"], 7: ["D", "I", "N"], 8: ["E", "J", "O"] };
const notes: Record<number, [string, number]> = {
  1: ["Navigation", 108],
  3: ["If you want to move one cell  at at time, use Arrow keys", 568],
  4: ["If you want to Select & move one cell at at time, use Shift and Arrow Keys", 752],
  5: ["If you want to Jump one cell  to the corner of a side, use Control and Arrow keys", 819],
};

function ExcelWindow() {
  return (
    <Excel>
      <XlTop>
        <Swirls width="526" height="66" viewBox="0 0 526 66" fill="#195a3b" opacity=".5">
          <path d="M20 0h70q-10 30-70 45 10-20 0-45z" /><path d="M120 40q40 15 60-25L170 0h70q-20 40-30 48-60 10-90-8z" /><path d="M240 0h150q-20 20-60 30h70q-20 24-70 24-50-4-90-20z" /><path d="M450 30q20 14 40 0h36v24l-76-4q-8-8 0-20z" />
        </Swirls>
        <XlTitle>
          <Slot $w={14} $ml={22}><svg width="14" height="14" viewBox="0 0 14 14" fill="none" stroke="#fff" strokeWidth="1.300"><path d="M1 1h12v12H1zM3 1.500v4.500h8V1.500M4 13V9.500h6V13" /></svg></Slot>
          <Slot $w={16} $ml={15}><svg width="16" height="14" viewBox="0 0 16 14" fill="none" stroke="#fff" strokeWidth="2"><path d="M6 1 2 5l4 4M2 5h7q5 0 5 4t-5 4" /></svg></Slot>
          <Slot $w={8} $ml={6}><Chev c="#b7d2c4" /></Slot>
          <Slot $w={16} $ml={10}><svg width="16" height="14" viewBox="0 0 16 14" fill="none" stroke="#478566" strokeWidth="1.600"><path d="M10 1l4 4-4 4M14 5H7q-5 0-5 4t5 4" /></svg></Slot>
          <Slot $w={8} $ml={6}><Chev c="#478566" /></Slot>
          <Slot $w={8} $ml={14}><svg width="6" height="6" viewBox="0 0 7 7" fill="#e0ece5"><path d="M0 .5h7v1H0zM0 3h7L3.500 6.500z" /></svg></Slot>
          <T w={81} s={13} ml={488}>Book3  -  Excel</T>
          <Slot $w={95} $ml={296} $up={3}><T w={95} s={13}>Karthikeya Sarma</T></Slot>
          <UserPic><svg width="25" height="26" viewBox="0 0 25 26" fill="#fff"><circle cx="12.500" cy="9" r="5" /><path d="M3 26v-6q0-5 5-5h9q5 0 5 5v6z" /></svg></UserPic>
          <Slot $w={16} $ml={27} $up={3}><svg width="14" height="12" viewBox="0 0 14 12" fill="none" stroke="#e8f1ec" strokeWidth="1.200"><path d="M.6.6h12.800v10.800H.6zM.6 3h12.800M7 10V5M5 7l2-2 2 2" /></svg></Slot>
          <Slot $w={12} $ml={36} $up={3}><Line w={11} h={2} d="M0 1h11" sw={1.3} /></Slot>
          <Slot $w={12} $ml={36} $up={3}><Line w={11} h={12} d="M1 3.500h7.500V11H1zM3 3V1h7v8H9" sw={1.2} /></Slot>
          <Slot $w={12} $ml={36} $up={3}><Line w={12} h={12} d="M1 1l10 10M11 1 1 11" sw={1.3} /></Slot>
        </XlTitle>
        <XlTabs>
          <T w={18} s={13} ml={22}>File</T>
          <HomeTab><T w={35} s={13} b={600} c="#3f7a5d">Home</T></HomeTab>
          <T w={31} s={13} ml={14}>Insert</T>
          <T w={68} s={13} ml={27}>Page Layout</T>
          <T w={51} s={13} ml={27}>Formulas</T>
          <T w={26} s={13} ml={27}>Data</T>
          <T w={38} s={13} ml={27}>Review</T>
          <T w={26} s={13} ml={28}>View</T>
          <T w={26} s={13} ml={27}>Help</T>
          <Slot $w={14} $ml={30}><svg width="12" height="18" viewBox="0 0 12 18" fill="none" stroke="#fff" strokeWidth="1.200"><path d="M3.500 12Q1 8.500 1 6a5 5 0 0 1 10 0q0 2.500-2.500 6zM3.500 14.500h5M4.500 17h3" /></svg></Slot>
          <T w={158} s={13} ml={13}>Tell me what you want to do</T>
          <Slot $w={16} $ml={531}><svg width="16" height="14" viewBox="0 0 16 14" fill="none" stroke="#d5e6dc" strokeWidth="1.100"><path d="M.6.6h14.800v9.800H6l-2.500 3v-3H.6z" /></svg></Slot>
        </XlTabs>
      </XlTop>
      <ExcelRibbon />
      <FormulaRow>
        <NameBox $w={106}><T w={15} s={13} ml={4}>A1</T><Slot $w={8} $ml={72}><Tri /></Slot></NameBox>
        <Slot $w={4} $ml={13} $h={22}><svg width="3" height="13" viewBox="0 0 3 13" fill="#999"><path d="M0 0h2v2H0zM0 5h2v2H0zM0 10h2v2H0z" /></svg></Slot>
        <NameBox $w={114} $ml={15}>
          <Slot $w={14} $ml={11}><svg width="12" height="11" viewBox="0 0 12 11" stroke="#bdbdbd" strokeWidth="1.500"><path d="M1 0l10 11M11 0 1 11" /></svg></Slot>
          <Slot $w={14} $ml={24}><svg width="14" height="11" viewBox="0 0 14 11" fill="none" stroke="#bdbdbd" strokeWidth="2"><path d="M1 6l4 4 8-9" /></svg></Slot>
          <Slot $w={16} $ml={24}><Glyph $s={17} $serif $i $up={2}>fx</Glyph></Slot>
        </NameBox>
        <NameBox $w={1080} $ml={4} $h={40}><T w={63} s={13} ml={10}>Navigation</T><Slot $w={10} $ml={991} $h={16}><svg width="8" height="6" viewBox="0 0 9 6" fill="none" stroke="#666" strokeWidth="2"><path d="M1 5l3.500-3.500L8 5" /></svg></Slot></NameBox>
      </FormulaRow>
      <GridArea>
        <Sheet>
          <HeadRow>
            <Corner><svg width="27" height="27" viewBox="0 0 27 27"><path d="M27 0v27H0z" fill="#b7b7b7" /></svg></Corner>
            <ColHead $w={805} $sel>A</ColHead><ColHead $w={110}>B</ColHead><ColHead $w={111}>C</ColHead><ColHead $w={111}>D</ColHead><ColHead $w={110}>E</ColHead><ColHead $w={33}> </ColHead>
          </HeadRow>
          {Array.from({ length: 13 }, (_, i) => i + 1).map(r => {
            const row = tableRows[r];
            const top = r === 2;
            return (
              <GridRow key={r}>
                <RowHead $sel={r === 1}>{r < 13 ? r : ""}</RowHead>
                <Cell $w={805} $left $sel={r === 1} $open={r === 5}>{notes[r] && <T w={notes[r][1]} s={22} f={CAL}>{notes[r][0]}</T>}{r === 1 && <Handle />}</Cell>
                <Cell $w={110} $edge={!!row} />
                <Cell $w={111} $box={!!row} $boxTop={top}>{row?.[0]}</Cell>
                <Cell $w={111} $box={!!row} $boxTop={top}>{row?.[1]}</Cell>
                <Cell $w={110} $box={!!row} $boxTop={top}>{row?.[2]}</Cell>
                <Cell $w={33} $boxTop={top || !!row} />
              </GridRow>
            );
          })}
        </Sheet>
        <VScroll>
          <ScrollBox $w={18} $h={17}><Tri s={8} r={180} /></ScrollBox>
          <ScrollBox $w={18} $h={240} />
          <Spacer />
          <ScrollBox $w={18} $h={18}><Tri s={8} /></ScrollBox>
        </VScroll>
      </GridArea>
      <SheetTabs>
        <Slot $w={8} $ml={18}><Tri c="#c2c2c2" r={90} /></Slot>
        <Slot $w={8} $ml={16}><Tri c="#c2c2c2" r={-90} /></Slot>
        <SheetTab><T w={45} s={14} b={700} c="#2c7550">Sheet1</T></SheetTab>
        <Slot $w={16} $ml={26}><svg width="16" height="16" viewBox="0 0 16 16" fill="none" stroke="#8a8a8a"><circle cx="8" cy="8" r="7.300" /><path d="M8 4.500v7M4.500 8h7" strokeWidth="1.400" /></svg></Slot>
        <Slot $w={3} $ml={616}><svg width="2" height="11" viewBox="0 0 2 11" fill="#999"><path d="M0 0h2v2H0zM0 4.500h2v2H0zM0 9h2v2H0z" /></svg></Slot>
        <Slot $w={18} $ml={11}><ScrollBox $w={18} $h={17}><Tri s={8} r={90} c="#555" /></ScrollBox></Slot>
        <ScrollBox $w={412} $h={17} />
        <HTrack />
        <ScrollBox $w={18} $h={17}><Tri s={8} r={-90} c="#555" /></ScrollBox>
      </SheetTabs>
      <XlStatus>
        <T w={30} s={11.5} ml={8}>Ready</T>
        <Slot $w={15} $ml={20}><svg width="15" height="15" viewBox="0 0 15 15" fill="none" stroke="#555" strokeWidth="1.300"><path d="M5 1.500A6 6 0 0 0 6 13M7 1v6M4 5h9M10 4v5l2 4M12 6l2 2" /></svg></Slot>
        <T w={118} s={11.5} ml={2}>Accessibility: Good to go</T>
        <Spacer />
        <ViewOn><svg width="14" height="14" viewBox="0 0 14 14" fill="none" stroke="#777"><path d="M.5.5h13v13H.5zM.5 5h13M.5 9.500h13M5 .5v13M9.500.5v13" /></svg></ViewOn>
        <Slot $w={42}><svg width="14" height="14" viewBox="0 0 14 14" fill="none" stroke="#888"><path d="M.5.5h13v13H.5zM3 3h8v8H3zM5 5h4M5 7h4M5 9h4" /></svg></Slot>
        <Slot $w={42}><svg width="14" height="14" viewBox="0 0 14 14" fill="none" stroke="#888"><path d="M.5.5h13v13H.5zM5 .5V8M9 .5V8M.5 8H9" /></svg></Slot>
        <Slot $w={10} $ml={5}><Line w={9} h={2} d="M0 1h9" sw={1.2} /></Slot>
        <Slot $w={104} $ml={6}><svg width="104" height="14" viewBox="0 0 104 14"><path d="M0 7h104" stroke="#555" strokeWidth="1.400" /><path d="M52 4v6" stroke="#333" strokeWidth="1.400" /><path d="M63 1h5v12h-5z" fill="#444" /></svg></Slot>
        <Slot $w={10} $ml={4}><Line w={9} h={9} d="M0 4.500h9M4.500 0v9" sw={1.2} /></Slot>
        <T w={27} s={11.5} ml={12}>180%</T>
      </XlStatus>
      <RecDot />
      <Cursor width="16" height="18" viewBox="0 0 16 18"><path d="M5.500 1h5v5H15v5h-4.500v6h-5v-6H1V6h4.500z" fill="#fff" stroke="#222" /></Cursor>
    </Excel>
  );
}

function Invited({ who, w }: { who: string; w: number }) {
  return (
    <>
      <EventIcon kind="add" />
      <EventText><T w={w} s={16.5} b={600} c="#3d3d3d">{who}</T><T w={197} s={16.5} ml={5}>was invited to the meeting.</T></EventText>
    </>
  );
}

function ChatPanel() {
  return (
    <Chat>
      <ChatHead><T w={153} s={25} b={700} c="#242424">Meeting chat</T><Line w={17} h={17} d="M.7.7l15.600 15.600M16.300.7.7 16.300" sw={1.3} /></ChatHead>
      <ClippedLine><Raised $n={3}><T w={63} s={16.5}>meeting.</T></Raised></ClippedLine>
      <Feed>
        <Event $mt={11} $h={24}><Invited who="suriya (Guest)" w={103} /></Event>
        <Msg $mt={17}>
          <AvatarWrap $mt={13}><Avatar $d={44} $bg="#fbe9d9" $c="#8e562e" $s={16}>L<Presence $ring="#fff" $d={18} /></Avatar></AvatarWrap>
          <Bubble><NameLine><T w={90} s={16.5} b={600} c="#242424">lvdsteams18</T><T w={38} s={16} c="#616161" ml={15}>16:49</T></NameLine><T w={35} s={18} c="#242424">sure</T></Bubble>
        </Msg>
        <Mine $h={114} $mt={17}><NameLine><T w={38} s={16} c="#555">16:50</T></NameLine><EmojiLine><Thumb /></EmojiLine></Mine>
        <Event $mt={19} $h={24}><Invited who="Sarang" w={51} /></Event>
        <Mine $h={73} $mt={17}><NameLine><T w={38} s={16} c="#555">16:59</T></NameLine><T w={25} s={18} c="#333">No</T></Mine>
        <Msg $mt={17}>
          <AvatarWrap $mt={12}><Avatar $d={44} $bg="#e1dcec" $c="#4c4372" $s={16}>L<Presence $ring="#fff" $d={18}><Dash /></Presence></Avatar></AvatarWrap>
          <Bubble><NameLine><T w={92} s={16.5} b={600} c="#242424">lvdsteams27</T><T w={38} s={16} c="#616161" ml={15}>17:04</T></NameLine><Raised $n={1}><T w={204} s={18} c="#333">are you sharing screen ?</T></Raised></Bubble>
        </Msg>
        <Event $mt={19} $h={46}>
          <EventIcon kind="leave" />
          <div>
            <EventText $drop={3}><T w={103} s={16.5} b={600} c="#3d3d3d">suriya (Guest)</T><T w={198} s={16.5} ml={5}>no longer has access to the</T></EventText>
            <Raised $n={2}><T w={34} s={16.5} ml={20}>chat.</T></Raised>
          </div>
        </Event>
        <Event $mt={9} $h={22}><Invited who="suriya (Guest)" w={103} /></Event>
      </Feed>
      <Compose><T w={174} s={18} c="#444">Type a new message</T></Compose>
      <ComposeTools>
        <Slot $w={44}><svg width="24" height="24" viewBox="0 0 24 24" fill="none" stroke="#616161" strokeWidth="1.300"><path d="M1 13.500 6.500 1.500 10 9M3 9.500h6M9 19q9-11 11-12 3 0 2.500 3-2 3-11 11.500L7 23z" /></svg></Slot>
        <Slot $w={44}><svg width="10" height="24" viewBox="0 0 10 24" fill="none" stroke="#616161" strokeWidth="1.400"><path d="M5 1q4 0 3.500 4l-1.500 9q-2 3-4 0L1.500 5Q1 1 5 1z" /><circle cx="5" cy="20.500" r="2.200" /></svg></Slot>
        <Slot $w={44}><Paperclip size={22} strokeWidth={1.4} /></Slot>
        <Slot $w={44}><Smile size={25} strokeWidth={1.3} /></Slot>
        <Slot $w={44}><svg width="23" height="21" viewBox="0 0 23 21"><rect x=".7" y=".7" width="21.600" height="19.600" rx="2.500" fill="none" stroke="#616161" strokeWidth="1.400" /><text x="11.500" y="14.500" textAnchor="middle" fontSize="10.500" fontWeight="600" fill="#616161" fontFamily={UI}>GIF</text></svg></Slot>
        <Slot $w={44}><svg width="23" height="23" viewBox="0 0 23 23" fill="none" stroke="#616161" strokeWidth="1.400"><path d="M4 1h15q3 0 3 3v10l-8 8H4q-3 0-3-3V4q0-3 3-3zM22 14h-5q-3 0-3 3v5M5 13q3 4 8 3" /><path d="M7 7.500v2M15.500 7.500v2" strokeWidth="2" /></svg></Slot>
        <Slot $w={44}><Dots c="#616161" /></Slot>
        <Slot $w={24} $ml={50}><svg width="24" height="23" viewBox="0 0 24 23" fill="none" stroke="#616161" strokeWidth="1.400" strokeLinejoin="round"><path d="M1 1l22 10.500L1 22l3.500-10.500zM4.500 11.500H14" /></svg></Slot>
      </ComposeTools>
    </Chat>
  );
}

function WinTaskbar() {
  return (
    <Taskbar>
      <Slot $w={60}><svg width="20" height="20" viewBox="0 0 20 20" fill="#000"><path d="M0 3l8.500-1.200v7.700H0zM9.500 1.600 20 0v9.500H9.500zM0 10.500h8.500v7.700L0 17zM9.500 10.500H20V20L9.500 18.400z" /></svg></Slot>
      <StartSearch><Slot $w={20}><FlippedSearch size={22} strokeWidth={1.6} /></Slot><T w={164} s={17.5} ml={16} c="#333">Type here to search</T></StartSearch>
      <TaskApp $w={61}><svg width="20" height="20" viewBox="0 0 20 20"><circle cx="10" cy="10" r="8.300" fill="none" stroke="#000" strokeWidth="2.600" /></svg></TaskApp>
      <TaskApp $w={59}><svg width="21" height="21" viewBox="0 0 21 21" fill="none" stroke="#000" strokeWidth="1.300"><path d="M1 1v3.500h12V1M1 7h12v7.500H1zM1 20v-3h12v3M18.500 0v5M18.500 10v10" /><path d="M17 6h3v3h-3z" fill="#000" /></svg></TaskApp>
      <TaskApp $w={70} $run><FaSkype size={28} color="#12a5ec" /><Badge>1</Badge></TaskApp>
      <TaskApp $w={55} $run>
        <svg width="28" height="24" viewBox="0 0 28 24"><path d="M0 0h11l2 3v4H0z" fill="#e0a013" /><path d="M0 5h11l2-2h14v19.500H0z" fill="#fcd462" /><path d="M5 23v-9q0-2 2-2h13q2 0 2 2v9h-5v-6h-7v6z" fill="#3d9be0" /></svg>
      </TaskApp>
      <TaskApp $w={66}>
        <svg width="22" height="28" viewBox="0 0 22 28"><defs><linearGradient id="of" x1="0" y1="0" x2="0" y2="1"><stop offset="0" stopColor="#f04e23" /><stop offset="1" stopColor="#c8321e" /></linearGradient></defs><path d="M0 6.500 14 0l8 3v21.500L14 28 3 23.500h11V5L7 7v12l-7 3z" fill="url(#of)" /><path d="M0 6.500 14 0v5L7 7v12l-7 3z" fill="#c0262f" /></svg>
      </TaskApp>
      <TaskApp $w={60}>
        <svg width="31" height="29" viewBox="0 0 31 29"><path d="M0 10 15.500 0 31 10v10H0z" fill="#0a4b8f" /><path d="M3 10h25v12H3z" fill="#f5f7f8" /><path d="M0 10l15.500 10L31 10v19H0z" fill="#1e9be0" /><path d="M31 10v19H0z" fill="#35b2f2" opacity=".8" /></svg>
      </TaskApp>
      <TaskApp $w={62} $run $on $line={62}><Chrome s={31} /><ProfileBadge><Bird s={20} /></ProfileBadge></TaskApp>
      <TaskApp $w={62}><Edge /></TaskApp>
      <TaskApp $w={64} $run><OfficeDoc l="X" c="#107c41" d="#0b5c30" /></TaskApp>
      <TaskApp $w={59} $run><OfficeDoc l="P" c="#c43e1c" d="#a33316" /></TaskApp>
      <TaskApp $w={66} $run>
        <svg width="30" height="31" viewBox="0 0 30 31"><path d="M1 3 20 0l3 17-19 4z" fill="#c8ccd4" /><path d="M2.500 4.500 19 2l2.500 14L5 19z" fill="#1428c8" /><path d="M2.500 4.500 14 3 5 19z" fill="#3f63f0" opacity=".7" /><path d="M8 20l8-1 2 5-10 3z" fill="#9da3ad" /><circle cx="21.500" cy="23" r="7" fill="#eef0ee" stroke="#aaa" /><path d="M18 20l3 3-3 3M25.500 19.500l-3 3 3 3" stroke="#3aa33a" strokeWidth="1.800" fill="none" /></svg>
      </TaskApp>
      <Spacer />
      <Slot $w={16}><Line w={16} h={9} d="M1 8l7-7 7 7" sw={1.5} /></Slot>
      <Slot $w={20} $ml={12}><svg width="20" height="14" viewBox="0 0 20 14"><path d="M5 13A4.300 4.300 0 0 1 4 4.600 6 6 0 0 1 15 4.500 4.300 4.300 0 0 1 15.500 13z" fill="#e4e2e0" stroke="#333" /><path d="M4 4.600A6 6 0 0 1 15 4.500L2 11Q-1 7 4 4.600z" fill="#777" /></svg></Slot>
      <Slot $w={16} $ml={13}><svg width="16" height="19" viewBox="0 0 16 19" fill="none" stroke="#000" strokeWidth="1.300"><path d="M1 5h9v9H1zM10 8.500 14.500 6v7L10 11M2 2q4-2.500 8 0M2 17q4 2.500 8 0" /></svg></Slot>
      <Slot $w={20} $ml={12}><MdMic size={23} color="#000" /></Slot>
      <Slot $w={20} $ml={10}><svg width="20" height="14" viewBox="0 0 20 14" fill="none" stroke="#000" strokeWidth="1.300"><path d="M5 5V13h13V3H8M18.700 6v4" /><path d="M7 7h5v4H7z" fill="#000" /><path d="M1 0v3M4 0v3M0 3h5v2q-2.500 2-5 0zM2.500 6v3" /></svg></Slot>
      <Slot $w={21} $ml={9}><svg width="21" height="18" viewBox="0 0 21 18" fill="none" stroke="#000" strokeWidth="1.300"><path d="M1 6h3l4-4v14l-4-4H1zM11 7q1.500 2 0 4M14 4.500q3.500 4.500 0 9M17 2q5 7 0 14" /></svg></Slot>
      <Slot $w={18} $ml={12}><svg width="17" height="17" viewBox="0 0 17 17" fill="none" stroke="#444" strokeWidth="1.300"><path d="M1 13Q4 3 15 1" stroke="#999" /><path d="M3 15Q6 6.500 15 5M6.500 16Q8.500 10 15 9M10 16q1-3 5-4" /><circle cx="14" cy="15" r="1.500" fill="#000" stroke="none" /></svg></Slot>
      <Slot $w={28} $ml={13}><T w={28} s={15}>ENG</T></Slot>
      <Clock><T w={34} s={15}>17:10</T><T w={76} s={15}>30-11-2022</T></Clock>
      <Slot $w={20} $ml={23}><svg width="20" height="20" viewBox="0 0 20 20"><path d="M0 0h20v16h-7l-3 3.500L7 16H0z" fill="#000" /><path d="M4 4.500h12M4 8h12M4 11.500h7" stroke="#fff" strokeWidth="1.200" /></svg></Slot>
      <ShowDesktop />
    </Taskbar>
  );
}

export default function App() {
  return (
    <Screen>
      <Global />
      <Browser />
      <TeamsBar>
        <Slot $w={25} $ml={34} $up={6}><DotGrid /></Slot>
        <T w={143} s={18.5} b={700} ml={62}>Microsoft Teams</T>
        <TeamsSearch><Search size={21} color="#616161" strokeWidth={1.4} /><T w={56} s={18} c="#4a4ea0" ml={9}>Search</T></TeamsSearch>
        <Slot $w={20} $ml={427}><Dots c="#fff" g={6.5} r={1.5} /></Slot>
        <Avatar $d={44} $bg="#f5d0de" $c="#8a2650" $s={17} $ml={23}>L<Presence $ring="#444791" $d={18} /></Avatar>
      </TeamsBar>
      <Body>
        <Rail>
          <RailBtn label="Activity" w={44}><Bell size={29} strokeWidth={1.2} /></RailBtn>
          <RailBtn label="Chat" w={28}><Line w={28} h={29} d="M14 1a13 13 0 1 1-6 24.500L1.500 28 3 20.500A13 13 0 0 1 14 1zM10 12h9M10 17h6" /></RailBtn>
          <RailBtn label="Calendar" w={54}><Line w={26} h={26} d="M4 1h18q3 0 3 3v18q0 3-3 3H4q-3 0-3-3V4q0-3 3-3zM1 6h24M8 12h.1M13 12h.1M18 12h.1M8 18h.1M13 18h.1" sw={1.7} /></RailBtn>
          <RailBtn label="Assignments" w={77} pull={15}><Line w={24} h={30} d="M2 25V12a10 10 0 0 1 20 0v13q0 2-2 2H4q-2 0-2-2zM2 18h20M7 18v4M8.500 3Q9 1 12 1t3.500 2M8 10q4-3 8 0v3H8z" /></RailBtn>
          <RailBtn label="Teams" w={38}><Line w={28} h={25} d="M9 9h10v9q0 5-5 5t-5-5zM6 10H1v7q0 4 5 5M22 10h5v7q0 4-5 5M14 1a2.500 2.500 0 1 0 .1 0M5 2a2 2 0 1 0 .1 0M23 2a2 2 0 1 0 .1 0" /></RailBtn>
          <RailBtn label="Calls" w={28}><Line w={22} h={28} d="M4 2l4-1 3 6-3 4q1 5 5 8l4-1 4 5-3 4Q7 28 3 14 0 5 4 2z" /></RailBtn>
          <RailBtn label="Files" w={27} h={76.8}><Line w={22} h={28} d="M4 1h9l8 8v15q0 3-3 3H4q-3 0-3-3V4q0-3 3-3zM13 1v6q0 2 2 2h6" /></RailBtn>
          <RailDots><Dots c="#555" g={8} /></RailDots>
          <RailRule />
          <RailBtn label="Apps" w={31} h={137} pull={14}><Line w={28} h={28} d="M4 1h20q3 0 3 3v20q0 3-3 3H4q-3 0-3-3V4q0-3 3-3zM7 7h4.500v4.500H7zM16.500 7H21v4.500h-4.500zM7 16.500h4.500V21H7zM16.500 16.500H21V21h-4.500z" /></RailBtn>
          <RailBtn label="Help" w={29} h={60} pull={11}><Line w={28} h={28} d="M14 1a13 13 0 1 1-.1 0M10 11q0-4 4-4t4 3.500q0 2-2.500 3.500-1.500 1-1.500 3M14 20.500v.2" sw={1.6} /></RailBtn>
        </Rail>
        <Stage>
          <ShareArea><ExcelWindow /></ShareArea>
          <Strip>
            <Overflow>
              <Avatar $d={61} $bg="#6264a7" $c="#fff" $s={17} $ml={78} $mt={3}>+9</Avatar>
              <Avatar $d={58} $bg="#dbe0d4" $c="#33471f" $ml={55}>AD</Avatar>
              <Avatar $d={58} $bg="#fadcd8" $c="#8a2e24" $ml={57}>DM</Avatar>
            </Overflow>
            <Tile $w={247} $bg="radial-gradient(circle at 50% 50%, #55528a 0%, #45425f 35%, #393748 75%)"><SpeakRing><Avatar $d={60} $bg="#cfd9e8" $c="#16345c">KS</Avatar></SpeakRing></Tile>
            <Tile $w={248} $bg="#353535"><Avatar $d={61} $bg="#d6ecec" $c="#1f6468">A</Avatar></Tile>
            <Tile $w={247} $bg="#323232"><Avatar $d={61} $bg="#fbe8c5" $c="#7d5a12">AM</Avatar></Tile>
            <Tile $w={248} $bg="#2e2e2e"><Avatar $d={61} $bg="#fbe3cd" $c="#8e4a1c">L</Avatar></Tile>
          </Strip>
        </Stage>
        <ChatPanel />
      </Body>
      <WinTaskbar />
    </Screen>
  );
}
